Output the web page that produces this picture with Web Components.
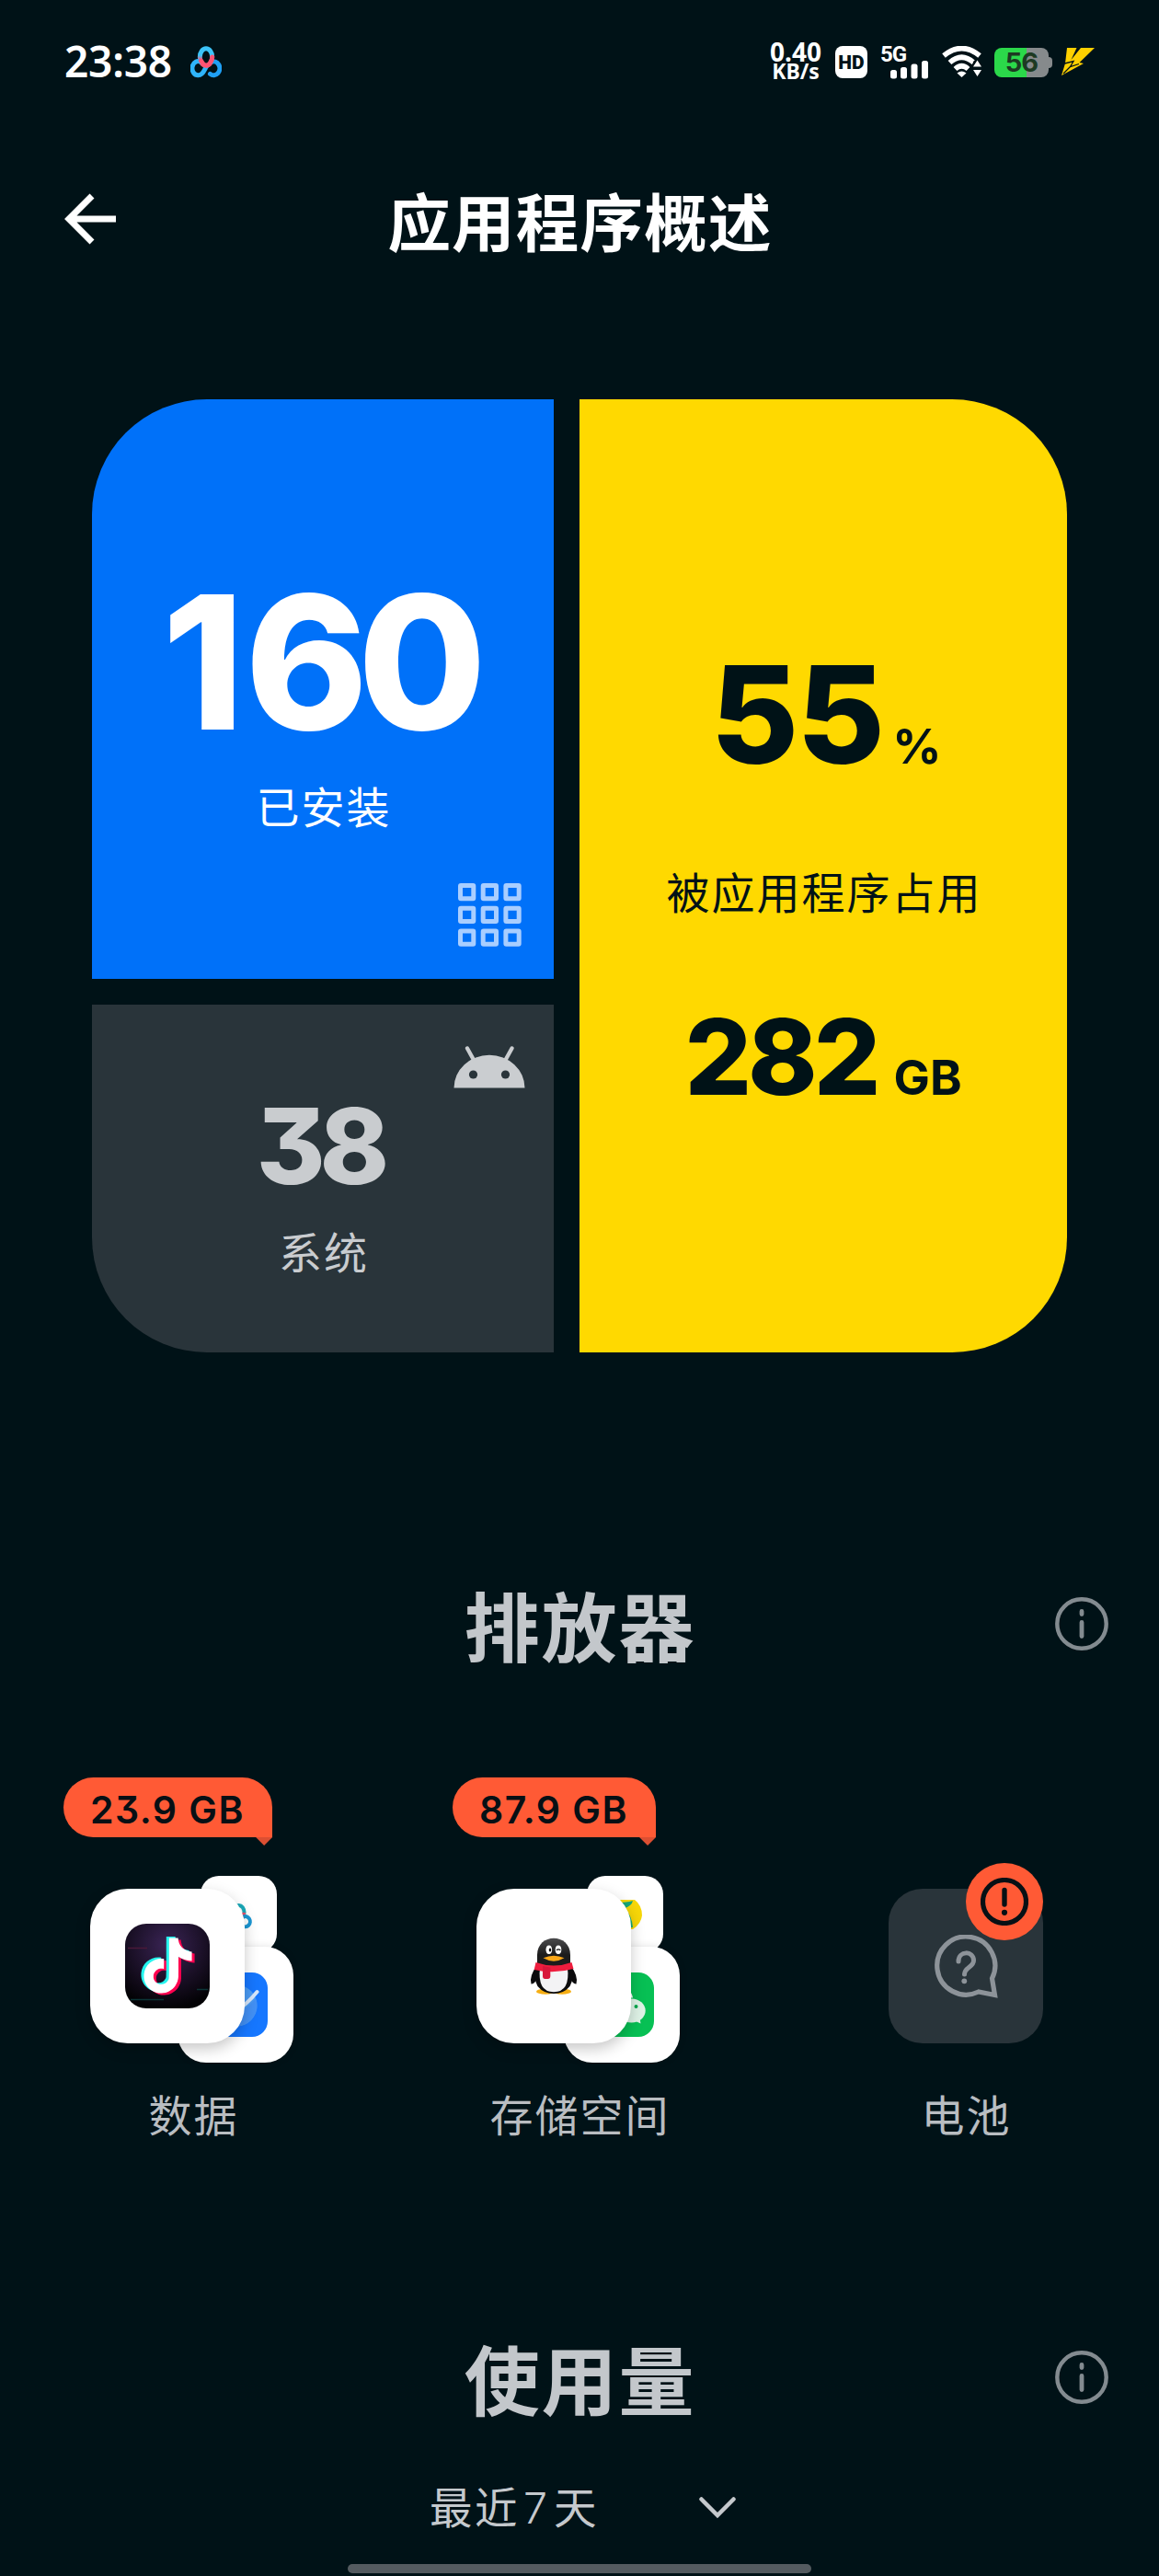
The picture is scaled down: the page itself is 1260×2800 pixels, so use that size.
<!DOCTYPE html>
<html lang="zh-CN">
<head>
<meta charset="utf-8">
<title>应用程序概述</title>
<style>
  html, body {
    margin: 0;
    background: #001217;
  }
  body {
    font-family: Inter, "Noto Sans CJK SC", sans-serif;
    color: #fff;
  }
</style>
</head>
<body>

<app-screen>

  <status-bar time="23:38" rate="0.40" unit="KB/s" battery="56"></status-bar>

  <page-header>应用程序概述</page-header>

  <card-grid>
    <stat-card kind="installed">
      <stat-value value="160" size="202" spacing="-11" lead="1" shift="-4"></stat-value>
      <span slot="label">已安装</span>
      <ui-icon slot="icon" name="grid"></ui-icon>
    </stat-card>
    <stat-card kind="usage">
      <stat-value value="55" size="147" spacing="-2" gap="10" unit="%" shift="3"></stat-value>
      <span slot="label">被应用程序占用</span>
      <stat-value slot="extra" value="282" size="114" spacing="-4" gap="18" unit="GB"></stat-value>
    </stat-card>
    <stat-card kind="system">
      <stat-value value="38" size="114" spacing="-6" shift="-3"></stat-value>
      <span slot="label">系统</span>
      <ui-icon slot="icon" name="android"></ui-icon>
    </stat-card>
  </card-grid>

  <section-title>排放器</section-title>

  <drain-list>
    <drain-item amount="23.9 GB" label="数据">
      <ui-icon slot="small" name="netdisk"></ui-icon>
      <ui-icon slot="medium" name="planet"></ui-icon>
      <ui-icon slot="large" name="note"></ui-icon>
    </drain-item>
    <drain-item amount="87.9 GB" label="存储空间">
      <ui-icon slot="small" name="lemon"></ui-icon>
      <ui-icon slot="medium" name="chat"></ui-icon>
      <ui-icon slot="large" name="penguin"></ui-icon>
    </drain-item>
    <drain-item unknown label="电池"></drain-item>
  </drain-list>

  <section-title>使用量</section-title>

  <range-picker days="7"></range-picker>

  <home-bar></home-bar>

</app-screen>

<script>

/*
 *  Icons
 */

const LOOPS = `
  <g fill="none" stroke-width="5" stroke-linecap="round">
    <ellipse cx="17" cy="12" rx="6.700" ry="9.200" stroke="url(#top)"/>
    <path d="M18 21.500 C15.500 24 14.500 31.800 8.600 31.800 A6.400 7.600 0 1 1 11.500 17.600" stroke="#2fb4fa"/>
    <path d="M22.600 17.600 A6.500 7.400 0 1 1 21.500 30.300" stroke="#1fa0f5"/>
    <path d="M11.500 16 Q17 26 22 17.500 Q23.700 15 23.700 12" stroke="#ff5372"/>
  </g>
  <linearGradient id="top" x1="0" y1="0" x2="0" y2="1">
    <stop offset=".4" stop-color="#3cc3f8"/><stop offset=".7" stop-color="#ff5372"/>
  </linearGradient>
`

const NOTE = 'M12.525.02c1.31-.02 2.61-.01 3.91-.02.08 1.53.63 3.09 1.75 4.17 1.12 1.11 2.7 1.62 4.24 1.79v4.03c-1.44-.05-2.89-.35-4.2-.97-.57-.26-1.1-.59-1.62-.93-.01 2.92.01 5.84-.02 8.75-.08 1.4-.54 2.79-1.35 3.94-1.31 1.92-3.58 3.17-5.91 3.21-1.43.08-2.86-.31-4.08-1.03-2.02-1.19-3.44-3.37-3.65-5.71-.02-.5-.03-1-.01-1.49.18-1.9 1.12-3.72 2.58-4.96 1.66-1.44 3.98-2.13 6.15-1.72.02 1.48-.04 2.96-.04 4.44-.99-.32-2.15-.23-3.02.37-.63.41-1.11 1.04-1.36 1.75-.21.51-.15 1.07-.14 1.61.24 1.64 1.82 3.02 3.5 2.87 1.12-.01 2.19-.66 2.77-1.61.19-.33.4-.67.41-1.06.1-1.79.06-3.57.07-5.36.01-4.03-.01-8.05.02-12.07z'

// name: [width, height, markup]
const icons = {

  loops: [34, 35, LOOPS],

  signal: [42, 20, `
    <g fill="#fff">
      <rect x="0" y="10" width="7" height="9.500" rx="2.500"/>
      <rect x="11" y="7" width="7" height="12.500" rx="2.500"/>
      <rect x="22.500" y="3.500" width="7" height="16" rx="2.500"/>
      <rect x="34" y="0" width="7" height="19.500" rx="2.500"/>
    </g>`],

  wifi: [44, 34, `
    <g fill="none" stroke="#fff" stroke-width="5.600">
      <path d="M2 10.500 Q21.500 -5.500 41 10.500"/>
      <path d="M8.500 18 Q21.500 6.500 34.500 18"/>
      <path d="M14.500 25 Q21.500 18.500 28.500 25"/>
    </g>
    <path d="M16.500 29.500 Q21.500 25.500 26.500 29.500 L21.500 34 Z" fill="#fff"/>
    <path d="M34 17 L38.500 13 H44 V34 H33 V24 Z" fill="#001217"/>
    <path d="M38.500 15.500 L43 22.500 H34 Z M38.500 33 L43 26 H34 Z" fill="#fff"/>`],

  bolt: [36, 30, `
    <path d="M6 0 H16.500 L10.500 13 L21 0 H36 L19.500 16 L24 17 L0 30 L4 17 Z" fill="#ffd100"/>
    <path d="M3.500 17 L13 14.500 L9.500 20.500 L19 17.500 M9.500 20.500 L2 28" fill="none" stroke="#001217" stroke-width="1.300"/>`],

  back: [58, 56, `
    <path d="M57 28 H7 M31 3 L6 28 L31 53" fill="none" stroke="#fff" stroke-width="7"/>`],

  grid: [69, 69, `
    <g fill="none" stroke="#a9ceff" stroke-width="5">
      ${[0, 24.7, 49.4].map(y => [0, 24.7, 49.4].map(x =>
        `<rect x="${x + 2.5}" y="${y + 2.5}" width="14.300" height="14.300" rx=".5"/>`
      ).join('')).join('')}
    </g>`],

  android: [78, 46, `
    <path d="M0.500 45.500 A38.500 35.700 0 0 1 77.500 45.500 Z" fill="#cacdd0"/>
    <path d="M15 2.500 L22.500 16 M63.500 2.500 L56 16" stroke="#cacdd0" stroke-width="4.300" stroke-linecap="round"/>
    <circle cx="21.500" cy="31" r="4.600" fill="#29343a"/>
    <circle cx="56.500" cy="31" r="4.600" fill="#29343a"/>`],

  info: [58, 58, `
    <circle cx="29" cy="29" r="26.700" fill="none" stroke="#838b90" stroke-width="4.400"/>
    <path d="M29 15.500 V18.500 M29 27.500 V42.500" stroke="#838b90" stroke-width="4.800" stroke-linecap="round"/>`],

  question: [69, 69, `
    <path d="M47.800 62 A31.500 31.500 0 1 1 62.500 47.500 L65.500 65.500 Z" fill="none" stroke="#8d9399" stroke-width="5.200"/>
    <path d="M26 29 C26 17 42.500 17 42.500 28 C42.500 35.500 32.500 35 32.500 43" fill="none" stroke="#8d9399" stroke-width="5" stroke-linecap="round"/>
    <circle cx="32.300" cy="50.300" r="2.900" fill="#8d9399"/>`],

  alert: [52, 52, `
    <circle cx="26" cy="26" r="23.500" fill="none" stroke="#071015" stroke-width="5.200"/>
    <path d="M26 13.500 V29" stroke="#071015" stroke-width="5.400" stroke-linecap="round"/>
    <circle cx="26" cy="37.800" r="3.100" fill="#071015"/>`],

  chevron: [40, 24, `
    <path d="M2.500 2.500 L20 20 L37.500 2.500" fill="none" stroke="#c5c9cd" stroke-width="4.500" stroke-linecap="round"/>`],

  netdisk: [46, 46, `
    <g transform="translate(8 10.500) scale(.86)">
      <g fill="none" stroke-width="4.600">
        <ellipse cx="17" cy="12" rx="6.900" ry="9.200" stroke="#19a9b8"/>
        <path d="M23.500 12 Q23 18 18 21.500" stroke="#e8506e"/>
        <circle cx="8.600" cy="24" r="6.600" stroke="#1b96d2"/>
        <path d="M22.600 17.600 A6 6.500 0 1 1 21.500 28.500" stroke="#1b96d2"/>
      </g>
    </g>`],

  planet: [70, 70, `
    <rect width="70" height="70" rx="17" fill="#1677ff"/>
    <circle cx="36" cy="36" r="22.500" fill="#4a9bf5"/>
    <path d="M36 58.500 A22.500 22.500 0 0 0 57 28 Q50 38 38 43 Z" fill="#4391f6"/>
    <path d="M12 54 Q40 44 58.500 21" fill="none" stroke="#d6e7fb" stroke-width="4" stroke-linecap="round"/>`],

  note: [92, 92, `
    <radialGradient id="bg" cx=".5" cy=".25" r=".75">
      <stop offset="0" stop-color="#3a2455"/>
      <stop offset=".55" stop-color="#1c1129"/>
      <stop offset="1" stop-color="#030205"/>
    </radialGradient>
    <rect width="92" height="92" rx="23" fill="url(#bg)"/>
    <path d="M3 26.500 H24" stroke="#4a1838" stroke-width="1.500"/>
    <path d="M78 71.500 H90 M6 82.500 H42" stroke="#0b3436" stroke-width="1.500"/>
    <g transform="translate(16.500 15.500) scale(2.500)">
      <path d="${NOTE}" fill="#ff004f" transform="translate(1.200 .8)"/>
      <path d="${NOTE}" fill="#25f4ee" transform="translate(-1.200 -.6)"/>
      <path d="${NOTE}" fill="#fff"/>
    </g>`],

  lemon: [46, 46, `
    <path d="M10 7 H33 Q41 13 41 24 Q40 33 31 39 Q16 40 10 30 Z" fill="#f7d708"/>
    <path d="M14 10 Q24 10 31 8 Q30 14 20 17 Z M22 16 Q30 24 31 37 L22 38 Z" fill="#17a878"/>`],

  chat: [70, 70, `
    <rect width="70" height="70" rx="17" fill="#07c054"/>
    <ellipse cx="28" cy="29" rx="19" ry="15.500" fill="#fff"/>
    <ellipse cx="45.500" cy="41.500" rx="16.300" ry="14" fill="#07c054"/>
    <ellipse cx="45.500" cy="41.500" rx="15.200" ry="13" fill="#dff3e7"/>
    <path d="M48 52 L55.500 55.500 L54.500 49 Z" fill="#dff3e7"/>
    <circle cx="50.500" cy="37" r="2" fill="#07a84c"/>
    <circle cx="41" cy="37" r="2" fill="#07a84c"/>`],

  penguin: [92, 92, `
    <linearGradient id="head" x1="0" y1="0" x2="0" y2="1">
      <stop offset="0" stop-color="#4a4a4c"/><stop offset=".6" stop-color="#1c1c1c"/>
    </linearGradient>
    <ellipse cx="37" cy="73.700" rx="10" ry="3" fill="#f6ae13"/>
    <ellipse cx="55" cy="73.700" rx="10" ry="3" fill="#f6ae13"/>
    <path d="M28 45 Q19 57 21.500 65.500 Q25 66 29 58 Z M64 45 Q73 57 70.500 65.500 Q67 66 63 58 Z" fill="#0b0b0d"/>
    <path d="M27 46 H65 Q69 58 63.500 68 Q57 76 46 76 Q35 76 28.500 68 Q23 58 27 46 Z" fill="#0b0b0d"/>
    <path d="M31 48 H61 Q64 74 46 74.300 Q28 74 31 48 Z" fill="#f3f3f5"/>
    <path d="M28 46 V34 C28 9.500 64 9.500 64 34 V46 Z" fill="url(#head)"/>
    <path d="M26.500 42 Q46 49 65.500 42 L67.500 49 Q46 55 24.700 50 Z" fill="#ee1d3e"/>
    <path d="M34 46 L42.300 47.500 V57 Q42.300 60 39.500 60 H36.500 Q34 60 34 57 Z" fill="#d8163a"/>
    <ellipse cx="40.800" cy="28.300" rx="3.300" ry="4.700" fill="#fff"/>
    <ellipse cx="51" cy="28.300" rx="3.300" ry="4.700" fill="#fff"/>
    <ellipse cx="42" cy="28.500" rx="1.200" ry="2" fill="#111"/>
    <path d="M49 28.700 Q51 27 53.300 28.700" stroke="#111" stroke-width="1.300" fill="none"/>
    <path d="M34.500 37.300 Q46 32 57.500 37.300 Q46 44 34.500 37.300 Z" fill="#faa81a"/>`]

}

customElements.define(

  'ui-icon',

  class UiIcon extends HTMLElement {

    constructor() {

      super()
      this.attachShadow({ mode: 'open' })

      const [width, height, markup] = icons[this.getAttribute('name')]

      this.shadowRoot.innerHTML = `
        <style>
          :host { display: block; flex: none; }
          svg { display: block; }
        </style>
        <svg width="${width}" height="${height}" viewBox="0 0 ${width} ${height}">${markup}</svg>
      `

    }

  }

)


/*
 *  Screen
 */

customElements.define(

  'app-screen',

  class AppScreen extends HTMLElement {

    constructor() {

      super()
      this.attachShadow({ mode: 'open' })

      this.shadowRoot.innerHTML = `
        <style>
          :host {
            display: flex;
            flex-direction: column;
            width: 1260px;
            height: 2800px;
            overflow: hidden;
            background: #001217;
          }
        </style>
        <slot></slot>
      `

    }

  }

)


/*
 *  Status bar
 */

customElements.define(

  'status-bar',

  class StatusBar extends HTMLElement {

    constructor() {

      super()
      this.attachShadow({ mode: 'open' })

      this.shadowRoot.innerHTML = `
        <style>
          :host {
            display: flex;
            align-items: center;
            height: 134px;
            padding: 0 70px;
            line-height: 1;
          }
          .time {
            width: 116px;
            margin-right: 21px;
            padding-bottom: 2px;
            font: 600 46px/60px "Noto Sans", sans-serif;
            letter-spacing: -.2px;
          }
          .rate {
            width: 62px;
            margin: 0 12px 0 auto;
            font: 700 23px/21px "Noto Sans", sans-serif;
            text-align: center;
            white-space: pre-line;
          }
          .rate::first-line { font-size: 28px; }
          .hd {
            width: 35px;
            height: 35px;
            margin-right: 14px;
            border-radius: 8px;
            background: #fff;
            color: #001217;
            font: 900 21px/36px Roboto, sans-serif;
            text-align: center;
          }
          .cell {
            width: 52px;
            height: 35px;
            margin-right: 15px;
          }
          .cell span {
            display: block;
            height: 17px;
            font: 700 24px/18px Roboto, sans-serif;
            letter-spacing: -1px;
          }
          .cell ui-icon { margin: -1px 0 0 11px; }
          .battery {
            display: flex;
            align-items: center;
            margin: 2px 10px 0 13px;
          }
          .level {
            width: 59px;
            height: 32px;
            border-radius: 8px;
            background: linear-gradient(90deg, #2bd84a 35px, #868a8c 35px);
            color: #1d3a22;
            font: 700 29px/32px Inter, sans-serif;
            letter-spacing: -1px;
            text-align: center;
          }
          .nub {
            width: 4px;
            height: 12px;
            border-radius: 0 4px 4px 0;
            background: #868a8c;
          }
        </style>
        <span class="time">${this.getAttribute('time')}</span>
        <ui-icon name="loops"></ui-icon>
        <div class="rate">${this.getAttribute('rate')}\n${this.getAttribute('unit')}</div>
        <div class="hd">HD</div>
        <div class="cell">
          <span>5G</span>
          <ui-icon name="signal"></ui-icon>
        </div>
        <ui-icon name="wifi"></ui-icon>
        <div class="battery">
          <div class="level">${this.getAttribute('battery')}</div>
          <div class="nub"></div>
        </div>
        <ui-icon name="bolt"></ui-icon>
      `

    }

  }

)


/*
 *  Page header
 */

customElements.define(

  'page-header',

  class PageHeader extends HTMLElement {

    constructor() {

      super()
      this.attachShadow({ mode: 'open' })

      this.shadowRoot.innerHTML = `
        <style>
          :host {
            display: grid;
            grid-template-columns: 1fr auto 1fr;
            align-items: center;
            height: 216px;
            padding: 0 69px;
            margin-bottom: 84px;
          }
          ui-icon { padding-bottom: 8px; }
          h1 {
            margin: 0;
            padding: 3px 0 0 1px;
            font-size: 68.500px;
            font-weight: 700;
            line-height: 90px;
            letter-spacing: 1.200px;
          }
        </style>
        <ui-icon name="back"></ui-icon>
        <h1><slot></slot></h1>
      `

    }

  }

)


/*
 *  Cards
 */

customElements.define(

  'card-grid',

  class CardGrid extends HTMLElement {

    constructor() {

      super()
      this.attachShadow({ mode: 'open' })

      this.shadowRoot.innerHTML = `
        <style>
          :host {
            display: grid;
            grid-template-columns: 502px 530px;
            grid-template-rows: 630px 378px;
            gap: 28px;
            margin: 0 100px 250px;
          }
        </style>
        <slot></slot>
      `

    }

  }

)

customElements.define(

  'stat-card',

  class StatCard extends HTMLElement {

    constructor() {

      super()
      this.attachShadow({ mode: 'open' })

      this.shadowRoot.innerHTML = `
        <style>
          :host {
            display: flex;
            flex-direction: column;
            align-items: center;
            box-sizing: border-box;
            position: relative;
          }
          :host([kind="installed"]) {
            padding-top: 184.5px;
            gap: 27px;
            border-radius: 125px 0 0 0;
            background: #0071f9;
          }
          :host([kind="usage"]) {
            grid-row: 1 / 3;
            grid-column: 2;
            padding-top: 268.5px;
            gap: 91px;
            border-radius: 0 125px 125px 0;
            background: #ffd900;
            color: #001217;
          }
          :host([kind="system"]) {
            padding-top: 96.5px;
            gap: 29px;
            border-radius: 0 0 0 125px;
            background: #29343a;
            color: #c9cccf;
          }
          .label {
            padding-left: 2px;
            font-size: 47px;
            line-height: 60px;
            letter-spacing: 2px;
          }
          .icon { position: absolute; right: 35px; }
          :host([kind="installed"]) .icon { bottom: 35px; }
          :host([kind="system"]) .icon { top: 45px; right: 31px; }
        </style>
        <slot></slot>
        <div class="label"><slot name="label"></slot></div>
        <slot name="extra"></slot>
        <div class="icon"><slot name="icon"></slot></div>
      `

    }

  }

)

customElements.define(

  'stat-value',

  class StatValue extends HTMLElement {

    constructor() {

      super()
      this.attachShadow({ mode: 'open' })

      const size = this.getAttribute('size')
      const spacing = this.getAttribute('spacing')
      const shift = Number(this.getAttribute('shift'))

      this.shadowRoot.innerHTML = `
        <style>
          :host {
            display: flex;
            align-items: baseline;
            gap: ${this.getAttribute('gap') || 0}px;
            height: ${size}px;
            margin: 0 ${-shift}px 0 ${shift}px;
            line-height: ${size}px;
          }
          .number {
            display: block;
            font-size: ${size}px;
            font-weight: 800;
            letter-spacing: ${spacing}px;
            font-feature-settings: "cv09";
          }
          .number::first-letter {
            letter-spacing: ${this.getAttribute('lead') || spacing}px;
          }
          .unit {
            font-size: 52.5px;
            font-weight: 700;
          }
        </style>
        <span class="number">${this.getAttribute('value')}</span>
      `

      if (this.hasAttribute('unit')) {

        this.shadowRoot.innerHTML += `<span class="unit">${this.getAttribute('unit')}</span>`

      }

    }

  }

)


/*
 *  Section title
 */

customElements.define(

  'section-title',

  class SectionTitle extends HTMLElement {

    constructor() {

      super()
      this.attachShadow({ mode: 'open' })

      this.shadowRoot.innerHTML = `
        <style>
          :host {
            display: grid;
            grid-template-columns: 1fr auto 1fr;
            align-items: center;
            height: 100px;
            padding: 0 55px;
            color: #c3c7cb;
          }
          h2 {
            grid-column: 2;
            margin: 0;
            padding: 1px 0 0 1px;
            font-size: 82px;
            font-weight: 700;
            line-height: 100px;
            letter-spacing: 1.800px;
          }
          ui-icon {
            justify-self: end;
            padding-bottom: 12px;
          }
        </style>
        <h2><slot></slot></h2>
        <ui-icon name="info"></ui-icon>
      `

    }

  }

)


/*
 *  Drain items
 */

customElements.define(

  'drain-list',

  class DrainList extends HTMLElement {

    constructor() {

      super()
      this.attachShadow({ mode: 'open' })

      this.shadowRoot.innerHTML = `
        <style>
          :host {
            display: grid;
            grid-template-columns: repeat(3, 1fr);
            margin: 112px 0 209px;
          }
        </style>
        <slot></slot>
      `

    }

  }

)

customElements.define(

  'drain-item',

  class DrainItem extends HTMLElement {

    constructor() {

      super()
      this.attachShadow({ mode: 'open' })

      const stack = `
        <div class="badge">${this.getAttribute('amount')}</div>
        <div class="stack">
          <div class="tile small"><slot name="small"></slot></div>
          <div class="tile medium"><slot name="medium"></slot></div>
          <div class="tile large"><slot name="large"></slot></div>
        </div>
      `

      const unknown = `
        <div class="empty">
          <ui-icon name="question"></ui-icon>
          <div class="alert"><ui-icon name="alert"></ui-icon></div>
        </div>
      `

      this.shadowRoot.innerHTML = `
        <style>
          :host {
            display: flex;
            flex-direction: column;
            align-items: center;
            height: 398px;
          }
          .badge {
            position: relative;
            box-sizing: border-box;
            height: 65px;
            margin: 0 55px 42px 0;
            padding: 3px 30px 0 29px;
            border-radius: 32.5px 32.5px 0 32.5px;
            background: #ff5a35;
            color: #071015;
            font-size: 41px;
            font-weight: 600;
            line-height: 65px;
            letter-spacing: 1.500px;
            white-space: pre;
            font-feature-settings: "cv09";
          }
          .badge::after {
            content: "";
            position: absolute;
            right: 0;
            top: 100%;
            width: 18px;
            height: 9px;
            background: #dc4f32;
            clip-path: polygon(0 0, 100% 0, 50% 100%);
          }
          .stack {
            position: relative;
            width: 224px;
            height: 203px;
            margin-bottom: 28px;
          }
          .tile {
            position: absolute;
            display: grid;
            place-items: center;
            background: #fff;
          }
          .small {
            left: 120px;
            top: 0;
            width: 83px;
            height: 83px;
            border-radius: 20px;
          }
          .medium {
            left: 95px;
            top: 77px;
            width: 126px;
            height: 126px;
            border-radius: 31px;
            box-shadow: 0 0 8px rgba(0, 0, 0, .12);
          }
          .large {
            left: 0;
            top: 14px;
            width: 168px;
            height: 168px;
            border-radius: 41px;
            box-shadow: 0 6px 16px rgba(0, 0, 0, .22);
          }
          .empty {
            position: relative;
            display: grid;
            place-items: center;
            width: 168px;
            height: 168px;
            margin: 121px 0 49px;
            border-radius: 37px;
            background: #29343a;
          }
          .alert {
            position: absolute;
            right: 0;
            top: -28px;
            display: grid;
            place-items: center;
            width: 84px;
            height: 84px;
            border-radius: 50%;
            background: #ff5a35;
          }
          .label {
            padding-left: 1px;
            color: #b9bdc1;
            font-size: 47px;
            line-height: 60px;
            letter-spacing: 2px;
          }
        </style>
        ${this.hasAttribute('unknown') ? unknown : stack}
        <div class="label">${this.getAttribute('label')}</div>
      `

    }

  }

)


/*
 *  Range picker
 */

customElements.define(

  'range-picker',

  class RangePicker extends HTMLElement {

    constructor() {

      super()
      this.attachShadow({ mode: 'open' })

      this.shadowRoot.innerHTML = `
        <style>
          :host {
            display: flex;
            align-items: center;
            height: 60px;
            margin-top: 57px;
            padding-left: 467px;
            gap: 109px;
            color: #c5c9cd;
            font-size: 46.500px;
            line-height: 60px;
            letter-spacing: 2.500px;
          }
          .days {
            margin: 0 7px 0 4px;
            font-weight: 300;
            letter-spacing: 0;
          }
        </style>
        <span>最近<span class="days">${this.getAttribute('days')}</span>天</span>
        <ui-icon name="chevron"></ui-icon>
      `

    }

  }

)

customElements.define(

  'home-bar',

  class HomeBar extends HTMLElement {

    constructor() {

      super()
      this.attachShadow({ mode: 'open' })

      this.shadowRoot.innerHTML = `
        <style>
          :host {
            display: block;
            width: 504px;
            height: 10px;
            margin: auto auto 3px;
            border-radius: 5px;
            background: #545b60;
          }
        </style>
      `

    }

  }

)

</script>
</body>
</html>
